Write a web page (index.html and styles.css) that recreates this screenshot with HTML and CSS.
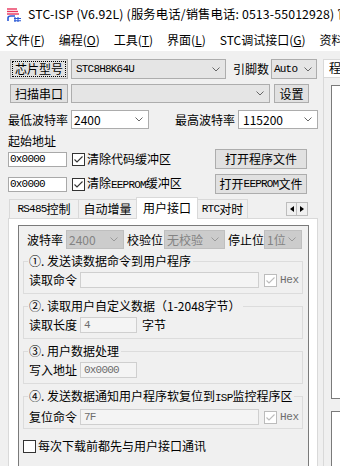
FILE: index.html
```html
<!DOCTYPE html>
<html>
<head>
<meta charset="utf-8">
<link rel="stylesheet" href="styles.css">
</head>
<body>
<div class="titlebar">
  <svg class="logo" width="16" height="16" viewBox="0 0 16 16">
    <path d="M1 3 H11" stroke="#e8345c" stroke-width="1.4"/>
    <path d="M1 5.5 H12" stroke="#e8345c" stroke-width="1.4"/>
    <path d="M1 8 H13" stroke="#e8345c" stroke-width="1.4"/>
    <path d="M2 15 V12 Q2 10 5 10 H9" fill="none" stroke="#2c5bd6" stroke-width="1.6"/>
    <path d="M9 11 V16 M12 11 V16 M8 12.5 H15 M8 14.8 H15" stroke="#2c5bd6" stroke-width="1.1"/>
  </svg>
  <span class="title">STC-ISP (V6.92L) (服务电话/销售电话: 0513-55012928) 官方网站: www.STCMCUDATA.com</span>
</div>
<div class="menubar">
  <span class="mi">文件(<u>F</u>)</span>
  <span class="mi">编程(<u>O</u>)</span>
  <span class="mi">工具(<u>T</u>)</span>
  <span class="mi">界面(<u>L</u>)</span>
  <span class="mi">STC调试接口(<u>G</u>)</span>
  <span class="mi">资料(<u>D</u>)</span>
</div>
<div class="client">
  <div class="left">
    <div class="row r1">
      <div class="btn focus bw58"><span class="focusbox">芯片型号</span></div>
      <div class="combo c-mcu"><span class="val mono">STC8H8K64U</span><svg class="arr" width="8" height="5" viewBox="0 0 8 5"><path d="M0.5 0.5 L4 4 L7.5 0.5" fill="none" stroke="#666"/></svg></div>
      <span class="lbl l-pins">引脚数</span>
      <div class="combo c-auto"><span class="val mono">Auto</span><svg class="arr" width="8" height="5" viewBox="0 0 8 5"><path d="M0.5 0.5 L4 4 L7.5 0.5" fill="none" stroke="#666"/></svg></div>
    </div>
    <div class="row r2">
      <div class="btn bw58">扫描串口</div>
      <div class="combo c-port"><span class="val"></span><svg class="arr" width="8" height="5" viewBox="0 0 8 5"><path d="M0.5 0.5 L4 4 L7.5 0.5" fill="none" stroke="#666"/></svg></div>
      <div class="btn b-set">设置</div>
    </div>
    <div class="row r3">
      <span class="lbl l-baud">最低波特率</span>
      <div class="combo white c-min"><span class="val">2400</span><svg class="arr" width="8" height="5" viewBox="0 0 8 5"><path d="M0.5 0.5 L4 4 L7.5 0.5" fill="none" stroke="#666"/></svg></div>
      <span class="lbl l-baud2">最高波特率</span>
      <div class="combo white c-max"><span class="val">115200</span><svg class="arr" width="8" height="5" viewBox="0 0 8 5"><path d="M0.5 0.5 L4 4 L7.5 0.5" fill="none" stroke="#666"/></svg></div>
    </div>
    <div class="lbl l-start">起始地址</div>
    <div class="row r4">
      <div class="edit e-addr mono">0x0000</div>
      <span class="chk on"><svg width="11" height="11" viewBox="0 0 11 11"><path d="M1.5 5.5 L4 8 L9.5 2.5" fill="none" stroke="#333" stroke-width="1.1"/></svg></span>
      <span class="lbl l-chk">清除代码缓冲区</span>
      <div class="btn b-open">打开程序文件</div>
    </div>
    <div class="row r5">
      <div class="edit e-addr mono">0x0000</div>
      <span class="chk on"><svg width="11" height="11" viewBox="0 0 11 11"><path d="M1.5 5.5 L4 8 L9.5 2.5" fill="none" stroke="#333" stroke-width="1.1"/></svg></span>
      <span class="lbl l-chk">清除<span class="mono">EEPROM</span>缓冲区</span>
      <div class="btn b-open">打开<span class="mono">EEPROM</span>文件</div>
    </div>
    <div class="tabs">
      <div class="tab t1"><span class="mono">RS485</span>控制</div>
      <div class="tab t2">自动增量</div>
      <div class="tab sel t3">用户接口</div>
      <div class="tab t4"><span class="mono">RTC</span>对时</div>
      <div class="spin">
        <span class="sb"><svg width="4" height="6" viewBox="0 0 4 6"><path d="M4 0 L0 3 L4 6 Z" fill="#000"/></svg></span>
        <span class="sb"><svg width="4" height="6" viewBox="0 0 4 6"><path d="M0 0 L4 3 L0 6 Z" fill="#000"/></svg></span>
      </div>
    </div>
    <div class="page">
      <div class="dlg">
        <div class="row brow">
          <span class="lbl l-b1">波特率</span>
          <div class="combo dis c-b1"><span class="val">2400</span><svg class="arr" width="8" height="5" viewBox="0 0 8 5"><path d="M0.5 0.5 L4 4 L7.5 0.5" fill="none" stroke="#9a9a9a"/></svg></div>
          <span class="lbl l-b2">校验位</span>
          <div class="combo dis c-b2"><span class="val">无校验</span><svg class="arr" width="8" height="5" viewBox="0 0 8 5"><path d="M0.5 0.5 L4 4 L7.5 0.5" fill="none" stroke="#9a9a9a"/></svg></div>
          <span class="lbl l-b3">停止位</span>
          <div class="combo dis c-b3"><span class="val">1位</span><svg class="arr" width="8" height="5" viewBox="0 0 8 5"><path d="M0.5 0.5 L4 4 L7.5 0.5" fill="none" stroke="#9a9a9a"/></svg></div>
        </div>
        <div class="group g1">
          <div class="gtitle">①. 发送读数据命令到用户程序</div>
          <div class="row grow">
            <span class="lbl l-g">读取命令</span>
            <div class="edit dis e-long"></div>
            <span class="chk dis on"><svg width="11" height="11" viewBox="0 0 11 11"><path d="M1.5 5.5 L4 8 L9.5 2.5" fill="none" stroke="#bcbcbc" stroke-width="1.1"/></svg></span>
            <span class="hex mono">Hex</span>
          </div>
        </div>
        <div class="group">
          <div class="gtitle">②. 读取用户自定义数据（1-2048字节）</div>
          <div class="row grow">
            <span class="lbl l-g">读取长度</span>
            <div class="edit dis e-short mono">4</div>
            <span class="lbl l-unit">字节</span>
          </div>
        </div>
        <div class="group">
          <div class="gtitle">③. 用户数据处理</div>
          <div class="row grow">
            <span class="lbl l-g">写入地址</span>
            <div class="edit dis e-short mono">0x0000</div>
          </div>
        </div>
        <div class="group">
          <div class="gtitle">④. 发送数据通知用户程序软复位到<span class="mono">ISP</span>监控程序区</div>
          <div class="row grow">
            <span class="lbl l-g">复位命令</span>
            <div class="edit dis e-long mono">7F</div>
            <span class="chk dis on"><svg width="11" height="11" viewBox="0 0 11 11"><path d="M1.5 5.5 L4 8 L9.5 2.5" fill="none" stroke="#bcbcbc" stroke-width="1.1"/></svg></span>
            <span class="hex mono">Hex</span>
          </div>
        </div>
        <div class="row crow">
          <span class="chk"></span>
          <span class="lbl l-chk">每次下载前都先与用户接口通讯</span>
        </div>
      </div>
    </div>
  </div>
  <div class="right">
    <div class="rtabs"><div class="rtab">程序文件</div></div>
    <div class="rpage">
      <div class="rbox"></div>
      <div class="rbox2"></div>
    </div>
  </div>
</div>
</body>
</html>
```

FILE: styles.css
```css
* { box-sizing: border-box; }
html, body { margin: 0; padding: 0; }
body {
  width: 340px;
  height: 466px;
  overflow: hidden;
  background: #f0f0f0;
  color: #000;
  font-family: "Noto Sans CJK SC", "Noto Sans", sans-serif;
  font-size: 12px;
  line-height: 14px;
}
.mono { font-family: "Liberation Mono", "Noto Sans CJK SC", monospace; font-size: 11px; letter-spacing: -0.8px; }

/* title bar */
.titlebar {
  height: 28px;
  background: #fff;
  display: flex;
  align-items: center;
  padding-left: 6px;
  white-space: nowrap;
  overflow: hidden;
}
.logo { flex: none; margin-right: 6px; margin-top: -1px; }
.title { font-size: 12.3px; letter-spacing: 0.15px; line-height: 16px; }

/* menu bar */
.menubar {
  height: 23px;
  background: #fff;
  display: flex;
  align-items: center;
  padding-left: 6px;
  white-space: nowrap;
  overflow: hidden;
}
.mi { margin-right: 14px; flex: none; }
.mi u { text-underline-offset: 1px; }

/* client */
.client {
  display: flex;
  padding: 8px 0 0 8px;
  height: 415px;
  overflow: hidden;
}
.left { width: 310px; flex: none; display: flex; flex-direction: column; }
.row { display: flex; align-items: center; flex: none; }
.lbl { white-space: nowrap; flex: none; }

.btn {
  flex: none;
  background: #e1e1e1;
  border: 1px solid #adadad;
  display: flex;
  align-items: center;
  justify-content: center;
  white-space: nowrap;
  font-size: 12px;
}
.btn.focus { padding: 2px; }
.focusbox {
  display: flex; align-items: center; justify-content: center;
  width: 100%; height: 100%;
  outline: 1px dotted #000;
}
.bw58 { width: 58px; margin-left: 2px; }

.combo {
  flex: none;
  display: flex;
  align-items: center;
  background: #e5e5e5;
  border: 1px solid #adadad;
}
.combo.white { background: #fff; border-color: #acacac; }
.combo.dis { background: #cccccc; border-color: #bfbfbf; color: #838383; }
.combo .val { flex: 1; padding-left: 3px; white-space: nowrap; overflow: hidden; }
.arr { flex: none; margin-right: 5px; }

.r1 { height: 20px; }
.r1 .btn { height: 20px; }
.c-mcu { width: 155px; height: 20px; margin-left: 3px; }
.c-mcu .val { padding-left: 4px; }
.l-pins { margin-left: 7px; }
.c-auto { width: 46px; height: 20px; margin-left: 2px; }
.c-auto .val { padding-left: 2px; }
.c-auto .arr { margin-right: 4px; }

.r2 { height: 19px; margin-top: 5px; }
.r2 .btn { height: 19px; }
.c-port { width: 199px; height: 19px; margin-left: 3px; }
.b-set { width: 35px; margin-left: 4px; }

.r3 { height: 19px; margin-top: 7px; }
.l-baud { width: 63px; }
.c-min { width: 78px; height: 19px; }
.c-min .val { padding-left: 2px; }
.l-baud2 { margin-left: 26px; width: 63px; }
.c-max { width: 80px; height: 19px; }
.c-max .val { padding-left: 4px; }

.l-start { margin-top: 6px; height: 12px; line-height: 12px; }

.edit {
  flex: none;
  background: #fff;
  border: 1px solid #a9a9a9;
  display: flex;
  align-items: center;
  padding-left: 1px;
  white-space: nowrap;
}
.edit.dis { background: #f4f4f4; border-color: #cfcfcf; color: #6d6d6d; padding-left: 3px; }
.e-addr { width: 59px; height: 15px; }

.chk {
  flex: none;
  width: 13px; height: 13px;
  border: 1px solid #333;
  background: #fff;
  display: flex; align-items: center; justify-content: center;
}
.chk.dis { border-color: #bcbcbc; }
.r4, .r5 { height: 20px; }
.r4 { margin-top: 2px; }
.r5 { margin-top: 5px; }
.r4 .chk, .r5 .chk { margin-left: 5px; }
.l-chk { margin-left: 2px; }
.b-open { width: 92px; height: 20px; margin-left: auto; margin-right: 11px; }

/* tabs */
.tabs {
  display: flex;
  align-items: flex-end;
  height: 21px;
  margin-top: 3px;
  flex: none;
  position: relative;
  z-index: 1;
}
.tab {
  flex: none;
  height: 19px;
  border: 1px solid #d9d9d9;
  border-bottom: none;
  border-right: none;
  background: #f0f0f0;
  display: flex;
  align-items: center;
  justify-content: center;
  white-space: nowrap;
}
.tab.t1 { width: 69px; margin-left: 1px; }
.tab.t2 { width: 58px; }
.tab.t3 { width: 62px; height: 22px; background: #fff; margin-bottom: -1px; border-right: 1px solid #d9d9d9; padding-bottom: 2px; }
.tab.t4 { width: 50px; border-left: none; border-right: 1px solid #d9d9d9; }
.spin { display: flex; margin-left: auto; margin-right: 10px; margin-bottom: 2px; }
.sb {
  width: 11px; height: 14px;
  border: 1px solid #bdbdbd;
  background: #f0f0f0;
  display: flex; align-items: center; justify-content: center;
}
.sb + .sb { border-left: none; }

.page {
  flex: none;
  width: 310px;
  height: 260px;
  background: #fff;
  border: 1px solid #d9d9d9;
  padding: 6px 8px 0 9px;
}
.dlg {
  height: 260px;
  background: #f0f0f0;
  border: 1px solid #7a7a7a;
  display: flex;
  flex-direction: column;
}
.brow { height: 19px; margin-top: 4px; padding-left: 8px; }
.l-b1 { width: 39px; }
.c-b1 { width: 58px; height: 19px; }
.l-b2 { margin-left: 3px; width: 36px; }
.c-b2 { width: 61px; height: 19px; margin-left: 1px; }
.l-b3 { margin-left: 3px; width: 36px; }
.c-b3 { width: 38px; height: 19px; }
.c-b3 .val, .c-b2 .val, .c-b1 .val { padding-left: 2px; }

.group {
  flex: none;
  width: 280px;
  height: 33px;
  margin: 12px 0 0 4px;
  border: 1px solid #dcdcdc;
  display: flex;
  flex-direction: column;
  align-items: flex-start;
}
.g1 { margin-top: 12px; }
.gtitle {
  margin: -8px 0 0 4px;
  padding: 0 2px 0 1px;
  background: #f0f0f0;
  line-height: 14px;
  white-space: nowrap;
}
.grow { height: 16px; margin-top: 4px; padding-left: 5px; }
.l-g { width: 51px; }
.e-long { width: 179px; height: 16px; }
.e-short { width: 57px; height: 16px; }
.grow .chk { margin-left: 5px; }
.hex { margin-left: 3px; color: #6d6d6d; letter-spacing: -0.4px; }
.l-unit { margin-left: 5px; }
.crow { height: 14px; margin-top: 10px; padding-left: 4px; }

/* right panel */
.right {
  flex: none;
  margin-left: 5px;
  width: 40px;
  display: flex;
  flex-direction: column;
}
.rtabs { height: 20px; display: flex; align-items: flex-end; margin-top: 0; }
.rtab {
  height: 18px;
  border: 1px solid #d9d9d9;
  border-bottom: none;
  background: #fff;
  padding-left: 5px;
  white-space: nowrap;
  line-height: 16px;
  width: 60px;
}
.rpage {
  flex: 1;
  border-left: 1px solid #d9d9d9;
  border-top: 1px solid #d9d9d9;
  background: #f0f0f0;
  padding: 7px 0 0 7px;
  display: flex;
  flex-direction: column;
}
.rbox { height: 314px; background: #fff; border: 1px solid #7a7a7a; flex: none; }
.rbox2 { margin-top: 12px; height: 80px; background: #fff; border: 1px solid #7a7a7a; border-right: none; flex: none; }
```
